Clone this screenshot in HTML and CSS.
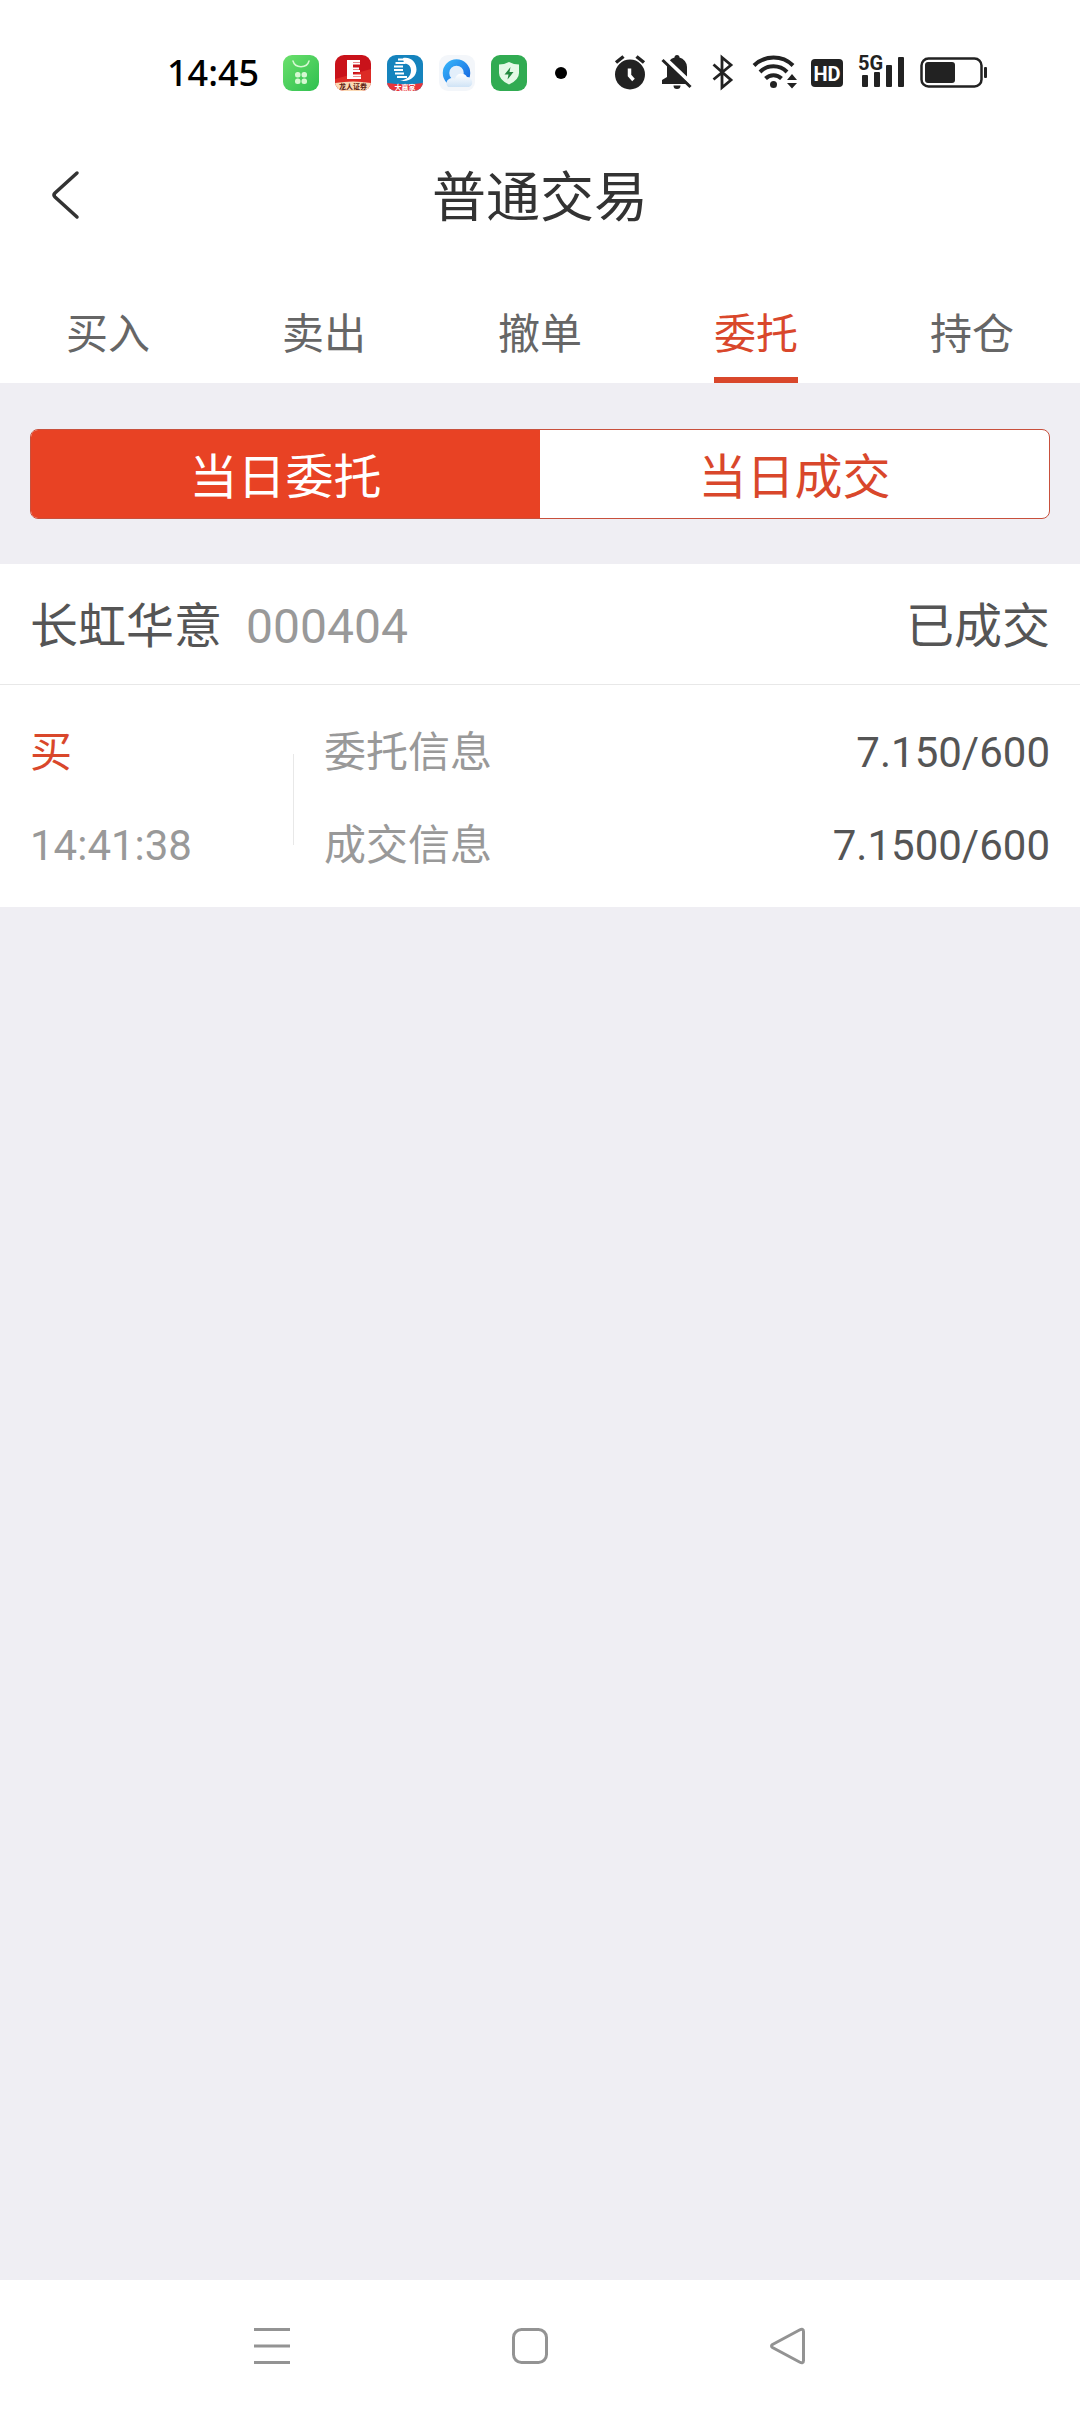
FILE: index.html
```html
<!DOCTYPE html>
<html lang="zh-CN">
<head>
  <meta charset="UTF-8">
  <title>普通交易</title>
  <meta name="viewport" content="width=device-width, initial-scale=1">
  <link rel="stylesheet" href="styles.css">
</head>
<body>

<!-- 状态栏 -->
<div class="statusbar">
  <span class="clock">14:45</span>
  <div class="apps">
    <svg width="36" height="36" viewBox="0 0 36 36">
      <defs>
        <linearGradient id="green" x1="0" y1="0" x2="1" y2="1">
          <stop offset="0" stop-color="#6be06c"/>
          <stop offset="1" stop-color="#2fbf50"/>
        </linearGradient>
      </defs>
      <rect width="36" height="36" rx="9" fill="url(#green)"/>
      <path d="M10 6c2 7.500 14 7.500 16 0" fill="none" stroke="#d6f8d2" stroke-width="1.500" stroke-linecap="round"/>
      <g fill="#d6f8d2">
        <rect x="12" y="17" width="5.500" height="5.500" rx="2.500"/>
        <rect x="18.500" y="17" width="5.500" height="5.500" rx="2.500"/>
        <rect x="12" y="23.500" width="5.500" height="5.500" rx="2.500"/>
        <rect x="18.500" y="23.500" width="5.500" height="5.500" rx="2.500"/>
      </g>
    </svg>
    <svg width="36" height="36" viewBox="0 0 36 36">
      <defs>
        <clipPath id="tile"><rect width="36" height="36" rx="9"/></clipPath>
      </defs>
      <g clip-path="url(#tile)">
        <rect width="36" height="36" fill="#c9121a"/>
        <path d="M0 24L36 14v14H0z" fill="#dc2b25"/>
        <path d="M0 28q18-3 36 0v8H0z" fill="#fbd9b4"/>
        <path d="M12 5h6v19h-6z" fill="#fff"/>
        <path d="M17 6h8M17 8.500h8M17 13.500h7M17 16h8M17 20.500h9M17 23h9" stroke="#fff" stroke-width="2"/>
        <text x="18" y="34" class="app-text app-text-dark">龙人证券</text>
      </g>
    </svg>
    <svg width="36" height="36" viewBox="0 0 36 36">
      <g clip-path="url(#tile)">
        <rect width="36" height="36" fill="#1583bd"/>
        <path d="M0 28q18 2.500 36 0v8H0z" fill="#e8363c"/>
        <path d="M16 3c8-1.500 13.500 4.500 13.500 11.500C29.500 22 22 27.500 13 25.500c7-.5 11-4.500 11-10C24 11 21 8.500 17 8.500z" fill="#fff"/>
        <path d="M11 4.500h8M8.500 8h10M7 11.500h9M7 15h9M8 18.500h9M10 22h10" stroke="#fff" stroke-width="1.800"/>
        <text x="18" y="35" class="app-text">大赢家</text>
      </g>
    </svg>
    <svg width="36" height="36" viewBox="0 0 36 36">
      <defs>
        <linearGradient id="ring" x1="0" y1="0" x2="1" y2="1">
          <stop offset="0" stop-color="#35b0f8"/>
          <stop offset="1" stop-color="#1667e0"/>
        </linearGradient>
        <linearGradient id="cloud" x1="0" y1="0" x2="0" y2="1">
          <stop offset="0" stop-color="#ffffff"/>
          <stop offset="1" stop-color="#cfe3f6"/>
        </linearGradient>
      </defs>
      <rect width="36" height="36" rx="9" fill="#f3f6fa"/>
      <circle cx="17.500" cy="18" r="10.500" fill="#e3effb" stroke="url(#ring)" stroke-width="6.500"/>
      <path d="M9 32a5 5 0 0 1 1-8q3-2 6 0a6.500 6.500 0 0 1 12-2 5.200 5.200 0 0 1 2 10z" fill="url(#cloud)"/>
    </svg>
    <svg width="36" height="36" viewBox="0 0 36 36">
      <rect width="36" height="36" rx="9" fill="#31ab52"/>
      <path d="M18 7q5 2.500 10 2.500V18q0 7-10 11.500Q8 25 8 18V9.500Q13 9.500 18 7z" fill="#e4f9e6"/>
      <path d="M19.500 12l-6 7.500h4l-1 5 6-7.500h-4z" fill="#23883f"/>
    </svg>
  </div>
  <span class="dot"></span>
  <div class="signals">
    <!-- 闹钟 -->
    <svg width="32" height="36" viewBox="0 0 32 36">
      <circle cx="16" cy="19.500" r="15" fill="#222"/>
      <path d="M2 7.500L9.500 1.500M30 7.500L22.500 1.500" stroke="#222" stroke-width="3.500"/>
      <path d="M15.500 13.500v7l4 4.500" fill="none" stroke="#fff" stroke-width="3.500"/>
    </svg>
    <!-- 静音 -->
    <svg width="32" height="36" viewBox="-1 0 32 36">
      <path d="M16 0a2.500 2.500 0 0 1 2.500 2.500A10 10 0 0 1 26 12v11l5 4v2H1v-4l5-3V12A10 10 0 0 1 13.500 2.500 2.500 2.500 0 0 1 16 0zM12.500 30.500h7a3.500 3.500 0 0 1-7 0z" fill="#222"/>
      <path d="M3 2.500L33 31" stroke="#fff" stroke-width="4"/>
      <path d="M1.500 5L29.500 32" stroke="#222" stroke-width="3"/>
    </svg>
    <!-- 蓝牙 -->
    <svg width="26" height="36" viewBox="-5 0 26 36">
      <path d="M1.500 9.500L19 25l-9 7.500v-30L19 10 1.500 24.500" fill="none" stroke="#222" stroke-width="2.800"/>
    </svg>
    <!-- 无线网络 -->
    <svg width="50" height="36" viewBox="-6 0 50 36">
      <g fill="none" stroke="#222" stroke-width="4">
        <path d="M1 10.500a28 28 0 0 1 39 0"/>
        <path d="M7 17a19 19 0 0 1 27 0"/>
        <path d="M12.500 23.500a11.500 11.500 0 0 1 16 0"/>
      </g>
      <circle cx="20.500" cy="29.500" r="3.500" fill="#222"/>
      <path d="M39 19l5 6H34zM39 33.500l5-5.500H34z" fill="#222"/>
    </svg>
    <!-- 高清通话 -->
    <svg width="32" height="36" viewBox="0 0 32 36">
      <rect y="4" width="32" height="28" rx="4" fill="#222"/>
      <text x="16" y="26" class="hd">HD</text>
    </svg>
    <!-- 移动信号 -->
    <svg width="48" height="36" viewBox="0 0 48 36">
      <text x="0" y="15" class="net">5G</text>
      <g fill="#222">
        <rect x="4" y="20" width="6" height="12" rx="1"/>
        <rect x="16" y="17" width="6" height="15" rx="1"/>
        <rect x="28" y="10" width="6" height="22" rx="1"/>
        <rect x="40" y="2" width="6" height="30" rx="1"/>
      </g>
    </svg>
    <!-- 电量 -->
    <svg width="68" height="36" viewBox="0 0 68 36">
      <rect x="1.500" y="3.500" width="60" height="28" rx="7" fill="none" stroke="#222" stroke-width="2.500"/>
      <rect x="5" y="7" width="30" height="21" rx="3" fill="#222"/>
      <rect x="64" y="12" width="3" height="11" rx="1" fill="#222"/>
    </svg>
  </div>
</div>

<header class="header">
  <button class="back" aria-label="返回">
    <svg width="28" height="48" viewBox="0 0 28 48">
      <path d="M25 1L3 21q-2 2 0 4l22 20" fill="none" stroke="#333" stroke-width="3.500" stroke-linecap="round"/>
    </svg>
  </button>
  <h1>普通交易</h1>
</header>

<nav class="tabs">
  <a href="#">买入</a>
  <a href="#">卖出</a>
  <a href="#">撤单</a>
  <a href="#" class="active">委托</a>
  <a href="#">持仓</a>
</nav>

<main>
  <div class="segment">
    <button class="selected">当日委托</button>
    <button>当日成交</button>
  </div>

  <section class="order">
    <div class="order-head">
      <span class="name">长虹华意</span>
      <span class="code">000404</span>
      <span class="state">已成交</span>
    </div>
    <div class="order-body">
      <div class="side">
        <span class="buy">买</span>
        <span>14:41:38</span>
      </div>
      <div class="info">
        <div class="line"><span>委托信息</span><span class="value">7.150/600</span></div>
        <div class="line"><span>成交信息</span><span class="value">7.1500/600</span></div>
      </div>
    </div>
  </section>
</main>

<!-- 系统导航键 -->
<footer class="sysnav">
  <button aria-label="菜单">
    <svg width="36" height="36" viewBox="0 0 36 36"><path d="M0 1.500h36M0 18h36M0 34.500h36"/></svg>
  </button>
  <button aria-label="主页">
    <svg width="36" height="36" viewBox="0 0 36 36"><rect x="1.500" y="1.500" width="33" height="33" rx="8"/></svg>
  </button>
  <button aria-label="返回">
    <svg width="36" height="36" viewBox="0 0 36 36"><path d="M2.500 16.500L29.500 2Q33.500 0 33.500 3.500v29Q33.500 36 29.500 34L2.500 19.500q-2-1.500 0-3z"/></svg>
  </button>
</footer>

</body>
</html>
```
FILE: styles.css
```css
* {
  box-sizing: border-box;
}
body {
  margin: 0;
  min-height: 100vh;
  display: flex;
  flex-direction: column;
  background-color: #efeef3;
  color: #555;
  font-family: Roboto, "Noto Sans CJK SC", sans-serif;
  font-size: 42px;
  line-height: 50px;
}
button {
  padding: 0;
  border: none;
  background: none;
  font-family: inherit;
  color: inherit;
  cursor: pointer;
}
svg {
  display: block;
  overflow: visible;
}

/* 状态栏 */
.statusbar {
  display: flex;
  align-items: center;
  height: 146px;
  padding: 0 92px 0 167px;
  background-color: #fff;
}
.clock {
  color: #000;
  font-family: "Noto Sans", sans-serif;
  font-size: 36px;
  font-weight: 500;
}
.apps {
  display: flex;
  gap: 16px;
  margin-left: 24px;
}
.app-text {
  font-size: 7px;
  font-weight: 700;
  fill: #fff;
  text-anchor: middle;
}
.app-text-dark {
  fill: #5b1a10;
}
.dot {
  width: 12px;
  height: 12px;
  margin-left: 28px;
  border-radius: 50%;
  background-color: #000;
}
.signals {
  display: flex;
  flex: 1;
  justify-content: space-between;
  margin-left: 47px;
}
.hd {
  font-size: 20px;
  font-weight: 700;
  fill: #fff;
  text-anchor: middle;
}
.net {
  font-size: 20px;
  font-weight: 700;
  fill: #222;
}

/* 标题 */
.header {
  display: flex;
  align-items: center;
  height: 100px;
  padding: 0 52px;
  background-color: #fff;
}
.back {
  width: 28px;
}
.header h1 {
  flex: 1;
  margin: 0 28px 0 0;
  padding-top: 6px;
  color: #333;
  font-size: 54px;
  font-weight: 400;
  text-align: center;
}

.tabs {
  display: flex;
  justify-content: space-around;
  padding-top: 64px;
  background-color: #fff;
}
.tabs a {
  padding-bottom: 17px;
  border-bottom: 6px solid transparent;
  color: #666;
  text-decoration: none;
}
.tabs .active {
  color: #d9472b;
  border-color: #d9472b;
}

main {
  flex: 1;
}
.segment {
  display: flex;
  height: 90px;
  margin: 46px 30px 45px;
  border: 1px solid #c8503c;
  border-radius: 8px;
  background-color: #fff;
  overflow: hidden;
}
.segment button {
  flex: 1;
  padding-bottom: 2px;
  color: #d9472b;
  font-size: 48px;
}
.segment .selected {
  background-color: #e84224;
  color: #fff;
}

/* 委托记录 */
.order {
  background-color: #fff;
}
.order-head {
  display: flex;
  align-items: center;
  height: 121px;
  padding: 5px 30px 0;
  border-bottom: 1px solid #e8e8e8;
  font-size: 48px;
}
.code {
  margin-left: 24px;
  color: #999;
}
.state {
  margin-left: auto;
}
.order-body {
  display: flex;
  align-items: center;
  padding: 43px 30px 36px;
  color: #999;
}
.side {
  display: flex;
  flex-direction: column;
  gap: 43px;
  width: 263px;
}
.buy {
  color: #d9472b;
}
.info {
  position: relative;
  display: flex;
  flex: 1;
  flex-direction: column;
  gap: 43px;
  padding-left: 31px;
}
.info::before {
  content: "";
  position: absolute;
  left: 0;
  top: 26px;
  bottom: 26px;
  border-left: 1px solid #e8e8e8;
}
.line {
  display: flex;
  justify-content: space-between;
}
.value {
  color: #555;
}

.sysnav {
  display: flex;
  justify-content: center;
  align-items: center;
  gap: 222px;
  height: 132px;
  padding-right: 20px;
  background-color: #fff;
}
.sysnav svg {
  fill: none;
  stroke: #939393;
  stroke-width: 3;
}
```
